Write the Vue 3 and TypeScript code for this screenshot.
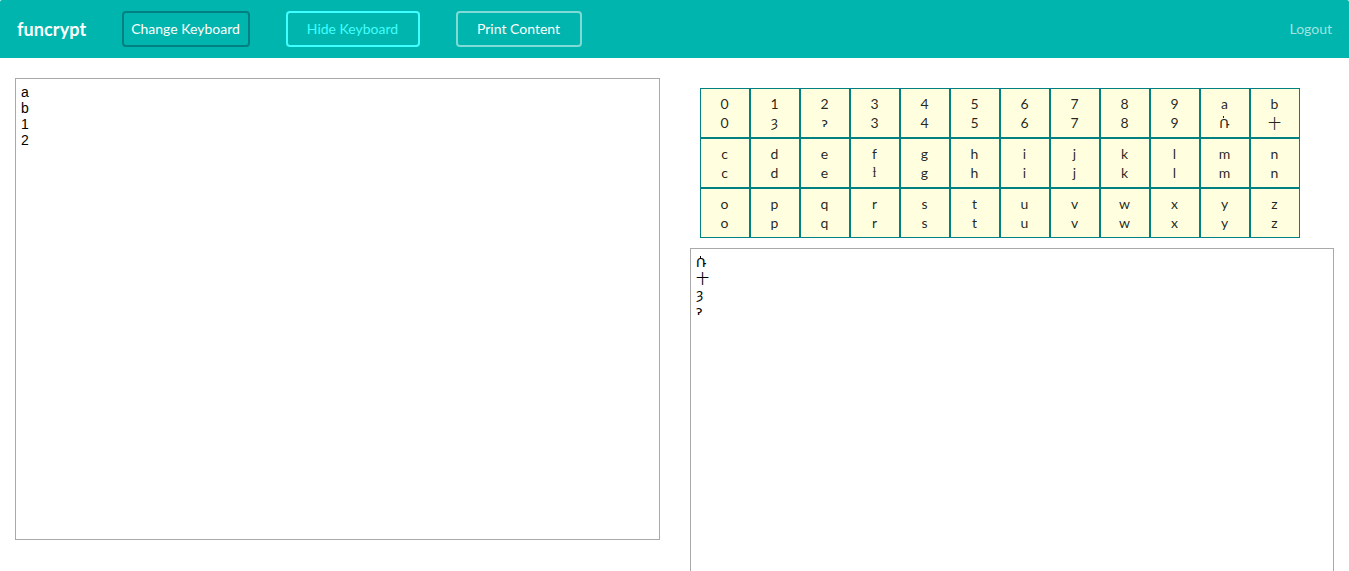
<script setup lang="ts">
interface Key { plain: string; cipher: string; kind: string }

const substitutes: Record<string, [string, string]> = {
  '1': ['ȝ', 'yogh'],
  '2': ['ɂ', 'glottal'],
  a: ['Ռ', 'arch'],
  b: ['十', 'cross'],
  f: ['ƚ', 'barred'],
}

const toKey = (plain: string): Key => {
  const found = substitutes[plain]
  return { plain, cipher: found ? found[0] : plain, kind: found ? found[1] : 'latin' }
}

const rows: Key[][] = ['0123456789ab', 'cdefghijklmn', 'opqrstuvwxyz'].map((r) => [...r].map(toKey))
const input: string[] = ['a', 'b', '1', '2']
const output: Key[] = input.map(toKey)
</script>

<template>
  <div class="page">
    <header class="navbar">
      <strong class="brand">funcrypt</strong>
      <button class="btn change">Change Keyboard</button>
      <button class="btn hide">Hide Keyboard</button>
      <button class="btn print">Print Content</button>
      <a class="logout">Logout</a>
    </header>
    <main class="panes">
      <section class="editor source">
        <div v-for="line in input" :key="line">{{ line }}</div>
      </section>
      <section class="right">
        <div class="keyboard">
          <template v-for="(row, i) in rows" :key="i">
            <div v-for="key in row" :key="key.plain" class="key">
              <span>{{ key.plain }}</span>
              <span :class="['glyph', key.kind]">{{ key.cipher }}</span>
            </div>
          </template>
        </div>
        <div class="editor result">
          <div v-for="key in output" :key="key.plain" class="line"><span :class="['glyph', key.kind]">{{ key.cipher }}</span></div>
        </div>
      </section>
    </main>
  </div>
</template>

<style>
html, body { overflow: hidden; background: #fff; }
</style>

<style scoped>
* { box-sizing: border-box; }
.page { height: 571px; overflow: hidden; font-family: Lato, sans-serif; font-size: 14px; color: rgba(0, 0, 0, 0.87); }
.navbar { height: 58px; display: flex; align-items: center; padding: 0 17px; background: #00b5ad; border-radius: 2px 2px 0 0; }
.brand { width: 105px; font-size: 18px; font-weight: 700; color: #fff; letter-spacing: 0.1px; }
.btn { height: 36px; padding: 0 1px 2px 0; border-radius: 4px; border: 2px solid; background: transparent; font: 14px Lato, sans-serif; color: #fff; white-space: nowrap; }
.change { width: 128px; border-color: #008080; }
.hide { width: 134px; margin-left: 36px; border-color: #40ffff; color: #40ffff; }
.print { width: 126px; margin-left: 36px; border-color: #80dad6; }
.logout { margin-left: auto; padding-bottom: 2px; color: #a3e3e0; }
.panes { display: flex; align-items: flex-start; gap: 30px; padding: 20px 15px 0; }
.editor { border: 1px solid #a9a9a9; padding: 5px; font: 14px/16px "Liberation Sans", Arial, sans-serif; color: #000; }
.source { width: 645px; height: 462px; }
.right { width: 644px; padding-top: 10px; }
.keyboard { display: grid; grid-template-columns: repeat(12, 50px); margin-left: 10px; }
.key { height: 50px; padding: 5px 1px 0 0; border: 1px solid #008080; background: #ffffe0; display: flex; flex-direction: column; align-items: center; line-height: 19px; }
.key span { height: 19px; }
.result { height: 462px; margin-top: 10px; }
.line { height: 16px; }
.glyph { display: inline-block; }
.result .glyph { height: 16px; vertical-align: top; }
.glottal { font-family: "DejaVu Sans", sans-serif; font-size: 13px; }
.result .glottal { line-height: 17px; }
.yogh { font-family: "DejaVu Sans", sans-serif; font-size: 14px; }
.arch { position: relative; font-family: "DejaVu Sans", sans-serif; font-size: 13px; }
.arch::before { content: ""; position: absolute; left: 4px; top: 3px; width: 1px; height: 2px; background: currentColor; }
.key .arch { padding-top: 1px; }
.result .arch { line-height: 18px; }
.result .arch::before { top: 2px; }
.cross { font-family: "Noto Sans CJK JP", sans-serif; font-size: 13px; }
.barred { font-family: "Liberation Serif", serif; font-size: 14px; }
</style>
